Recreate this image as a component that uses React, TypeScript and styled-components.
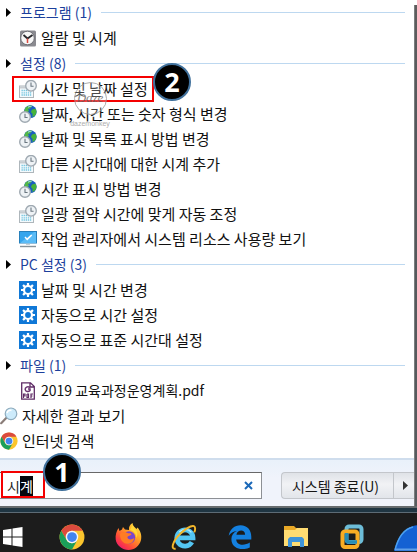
import React, { useEffect, useRef, useState } from "react";
import styled, { createGlobalStyle } from "styled-components";

const GlobalStyle = createGlobalStyle`
  * { box-sizing: border-box; }
  body {
    margin: 0;
    background: #fff;
    overflow: hidden;
    font-family: "Noto Sans CJK KR", "Noto Sans", sans-serif;
  }
  button, input { font: inherit; }
`;

const Screen = styled.main`
  display: flex;
  flex-direction: column;
  min-height: 100vh;
`;

const MenuFrame = styled.div`
  display: flex;
`;

const Menu = styled.div`
  flex: 1;
  min-width: 0;
`;

const RightEdge = styled.div`
  width: 3px;
  margin-top: 5px;
  background: linear-gradient(#5d5d5d, #53595c 25%, #565b5e);
  border-left: 1px solid #7b7d7e;
`;

const Section = styled.section`
  & + & { margin-top: 1px; }
`;

const HeadingButton = styled.button`
  display: flex;
  align-items: center;
  width: 100%;
  height: 25px;
  padding: 0 9px 0 6px;
  border: 0;
  background: none;
  color: #1c3f9c;
  font-size: 14px;
  line-height: 25px;
  white-space: nowrap;

  &::after {
    content: "";
    flex: 1;
    height: 1px;
    margin-left: 9px;
    background: #bdd8f0;
  }
`;

const Arrow = styled.svg`
  width: 5px;
  height: 9px;
  margin-right: 9px;
`;

const List = styled.ul`
  margin: 0;
  padding: 0;
  list-style: none;
`;

const RootList = styled(List)`
  padding-bottom: 5px;
`;

const Item = styled.li`
  position: relative;
  height: 25px;
`;

const ItemLink = styled.a<{ $root?: boolean; $small?: boolean }>`
  display: flex;
  align-items: center;
  gap: 4px;
  height: 25px;
  padding-left: ${(p) => (p.$root ? 0 : 19)}px;
  color: #111;
  font-size: ${(p) => (p.$small ? 14 : 15)}px;
  line-height: 25px;
  text-decoration: none;
  white-space: nowrap;
`;

const Icon = styled.svg<{ $size?: number }>`
  flex: none;
  display: block;
  width: ${(p) => p.$size ?? 18}px;
  height: ${(p) => p.$size ?? 18}px;
`;

const Footer = styled.footer`
  display: flex;
  gap: 19px;
  padding: 12px 0 7px;
  border-top: 2px solid #cfdded;
  background: linear-gradient(#e9f1fa, #f0f3fb 40%);
`;

const SearchBox = styled.div`
  position: relative;
  display: flex;
  align-items: center;
  flex: 1;
  height: 27px;
  border: 1px solid #8d9095;
  border-top-color: #686868;
  border-left: 0;
  background: #fff;
`;

const SearchInput = styled.input`
  flex: 1;
  min-width: 0;
  height: 20px;
  padding: 0 7px;
  border: 0;
  outline: 0;
  background: none;
  color: #222;
  caret-color: transparent;
  font-size: 14px;
  line-height: 20px;

  &::selection { background: #05070d; color: #fff; }
`;

const ClearButton = styled.button`
  display: grid;
  place-items: center;
  width: 26px;
  height: 20px;
  padding: 0;
  border: 0;
  background: none;
`;

const PowerGroup = styled.div`
  display: flex;
  width: 133px;
  height: 27px;
  border: 1px solid #c3c6cb;
  border-right: 0;
  border-radius: 4px 0 0 4px;
  background: linear-gradient(#dfe2e7, #f1f2f5 45%, #e2e5ea);
`;

const PowerButton = styled.button`
  flex: 1;
  padding: 0 4px 0 0;
  border: 0;
  background: none;
  color: #151515;
  font-size: 14px;
  line-height: 24px;
  white-space: nowrap;
`;

const PowerMore = styled.button`
  display: grid;
  place-items: center;
  width: 21px;
  padding: 0 0 0 3px;
  border: 0;
  border-left: 1px solid #c3c6cb;
  background: none;
`;

const BottomEdge = styled.div`
  height: 7px;
  border-top: 2px solid #666b6e;
  border-bottom: 1px solid #5d6b75;
  background: #1f3542;
`;

const Taskbar = styled.nav`
  display: flex;
  flex: 1;
  min-height: 39px;
  background: #1c1c1c;
  overflow: hidden;
`;

const TaskButton = styled.button<{ $start?: boolean }>`
  display: flex;
  flex: none;
  align-items: center;
  justify-content: ${(p) => (p.$start ? "flex-start" : "center")};
  width: ${(p) => (p.$start ? 44 : 56)}px;
  padding: 8px 0 0 ${(p) => (p.$start ? 3 : 0)}px;
  border: 0;
  background: none;
`;

const Highlight = styled.span<{ $place: "item" | "search" }>`
  position: absolute;
  top: ${(p) => (p.$place === "item" ? 0 : -2)}px;
  left: ${(p) => (p.$place === "item" ? 12 : 1)}px;
  width: ${(p) => (p.$place === "item" ? 142 : 44)}px;
  height: ${(p) => (p.$place === "item" ? 26 : 27)}px;
  border: 2px solid #f40000;
  pointer-events: none;
`;

const StepBadge = styled.span<{ $place: "item" | "search" }>`
  position: absolute;
  top: ${(p) => (p.$place === "item" ? -13 : -20)}px;
  left: ${(p) => (p.$place === "item" ? 153 : 43)}px;
  z-index: 2;
  width: 38px;
  height: 38px;
  border: 2px solid #41719c;
  border-radius: 50%;
  background: #000;
  color: #fff;
  font: bold 27px/33px "Noto Sans", sans-serif;
  text-align: center;
  pointer-events: none;
`;

const Watermark = styled.span`
  position: absolute;
  top: 6px;
  left: 67px;
  z-index: 1;
  display: flex;
  flex-direction: column;
  align-items: center;
  gap: 4px;
  width: 46px;
  color: #999;
  font: 7px/10px "Liberation Sans", sans-serif;
  opacity: 0.8;
  pointer-events: none;
`;

const WatermarkRing = styled.span`
  width: 33px;
  height: 33px;
  border: 1px solid #999;
  border-radius: 50%;
  background: rgba(255, 255, 255, 0.3);
  color: #666;
  font: italic 13px/30px "Liberation Serif", serif;
  text-align: center;
`;

const AlarmIcon = () => (
  <Icon viewBox="0 0 18 18" aria-hidden="true">
    <rect x="1" y="1.500" width="16" height="16" rx="1.500" fill="#8a8a90" />
    <circle cx="8.500" cy="9" r="6.800" fill="#f6f6f6" stroke="#6d6d74" strokeWidth="1" />
    <path d="M4.500 6 8.500 9.500l5-3.500" stroke="#29292d" strokeWidth="1.800" fill="none" />
    <path d="M8.500 9.500v4.500" stroke="#d9483f" strokeWidth="1.500" />
  </Icon>
);

const Clock = ({ x, y }: { x: number; y: number }) => (
  <g>
    <circle cx={x} cy={y} r="5.3" fill="#eef2f5" stroke="#9fa9b1" strokeWidth="1.4" />
    <path d={`M${x} ${y - 3.3}V${y + 0.5}H${x + 2.6}`} stroke="#6b7780" strokeWidth="1.1" fill="none" />
  </g>
);

const CalendarIcon = () => (
  <Icon viewBox="0 0 18 18" aria-hidden="true">
    <rect x=".5" y="6" width="14" height="11.5" fill="#f4fafd" stroke="#aeb6bb" />
    <path d="M1 6.5h13v2H1z" fill="#c7cdd1" />
    <path d="M2.5 10.5h10M2.5 12.8h10M2.5 15h10" stroke="#71c4de" strokeWidth="1.3" strokeDasharray="1.3 .8" />
    <Clock x={12} y={5.8} />
  </Icon>
);

const GlobeIcon = () => (
  <Icon viewBox="0 0 18 18" aria-hidden="true">
    <circle cx="11.3" cy="6.7" r="6.4" fill="#1b60bd" />
    <path d="M6 3.5C8 .5 12 0 13 1L11 3.5 9 4l1 2-3 2-2-1z" fill="#55b948" />
    <path d="M13 4.5l3.5-.7c1.5 2 1.3 5-.6 6.8L13.4 12l.3-3-1.8-2z" fill="#46b33a" />
    <path d="M9 2.3c1.3-1 2.5-1 3.5-.7" stroke="#a9dfff" fill="none" />
    <Clock x={6} y={12} />
  </Icon>
);

const MonitorIcon = () => (
  <Icon viewBox="0 0 18 18" aria-hidden="true">
    <rect x=".5" y="1.5" width="17" height="11.5" fill="#35a5ed" stroke="#2780bc" />
    <path d="M1 13 15 2h2v11z" fill="#5bbcf7" />
    <path d="M6 7l2.2 2.4L12.7 5" stroke="#fff" strokeWidth="1.5" fill="none" />
    <path d="M1 16.5h16" stroke="#87939b" strokeWidth="1.4" />
    <path d="M7 14.5h4" stroke="#c6d0d6" />
  </Icon>
);

const GearIcon = () => (
  <Icon viewBox="0 0 18 18" aria-hidden="true">
    <rect width="18" height="18" fill="#0f78d7" />
    <g stroke="#fff" strokeWidth="2.2">
      <path d="M9 2v3M9 13v3M2 9h3M13 9h3M4.05 4.05l2.1 2.1M11.85 11.85l2.1 2.1M4.05 13.95l2.1-2.1M11.85 6.15l2.1-2.1" />
      <circle cx="9" cy="9" r="4" fill="#0f78d7" />
    </g>
  </Icon>
);

const PdfIcon = () => (
  <Icon viewBox="0 0 18 18" aria-hidden="true">
    <path d="M2.7 10V.8h8.8l3.8 3.8V10M11 1v4h4" fill="#fff" stroke="#5f2c66" strokeWidth="1.3" />
    <path d="M2.7 10v7.2h12.6V10" fill="#fff" stroke="#5f2c66" strokeWidth="1.3" />
    <path d="M11 5.5C8.500 4 6 5.300 6.200 7.500S9.500 10.400 11 8.500V7H9" fill="none" stroke="#6a3371" strokeWidth="1.5" />
    <path d="M4.500 16v-4h1.500v2H4.500M8 12v3.500h1.500V12H8M12 16v-4h2M12 14h1.500" fill="none" stroke="#5f2c66" strokeWidth="1.200" />
  </Icon>
);

const SearchIcon = () => (
  <Icon viewBox="0 0 18 18" aria-hidden="true">
    <path d="M1.200 16.200l5-5.200" stroke="#8a7d78" strokeWidth="2.200" strokeLinecap="round" />
    <circle cx="11" cy="6.800" r="5.800" fill="#cdebfb" stroke="#8eabbd" strokeWidth="1.200" />
    <path d="M7 6c.7-2 2.500-3 4.500-2.500" stroke="#fff" strokeWidth="1.500" fill="none" />
  </Icon>
);

const ChromeIcon = ({ size = 18 }: { size?: number }) => (
  <Icon $size={size} viewBox="0 0 48 48" aria-hidden="true">
    <circle cx="24" cy="24" r="23" fill="#fbc52d" />
    <path d="M4.100 12.500A23 23 0 0 1 43.900 12.500H24a11.500 11.500 0 0 0-10 17.200z" fill="#db4a3e" />
    <path d="M4.100 12.500A23 23 0 0 0 24 47l10-17.300A11.500 11.500 0 0 1 14 29.700z" fill="#1a9f5a" />
    <circle cx="24" cy="24" r="11.500" fill="#f4f6fb" />
    <circle cx="24" cy="24" r="9" fill="#4285ee" />
  </Icon>
);

const WindowsIcon = () => (
  <Icon $size={20} viewBox="0 0 20 20" aria-hidden="true">
    <path d="M0 3l8.500-1.200v7.700H0zM9.500 1.600 19.500 0v9.500h-10zM0 10.500h8.500v7.700L0 17zM9.500 10.500h10V20l-10-1.600z" fill="#fff" />
  </Icon>
);

const FirefoxIcon = () => (
  <Icon $size={27} viewBox="0 0 27 27" aria-hidden="true">
    <defs>
      <linearGradient id="fox" x1="1" y1="0" x2=".2" y2="1">
        <stop offset="0" stopColor="#fff04a" />
        <stop offset=".4" stopColor="#ffa424" />
        <stop offset=".75" stopColor="#ff4939" />
        <stop offset="1" stopColor="#ed166e" />
      </linearGradient>
    </defs>
    <path d="M3.500 5l1 3L7 6.500 8 4l2 2.500 4 .5c-.5-3 1-5.500 3.500-7 .2 3 2.500 4 4 6l1-1.500C25.500 8 27 12 26 17c-1.500 6-6.500 10-12.500 10S1.500 22.500.7 16.500C.2 12 1.500 8 3.500 5z" fill="url(#fox)" />
    <circle cx="14" cy="14.500" r="6.200" fill="#7745cf" />
    <path d="M5 11c3-3 6-2 8-.7 2-.3 3 0 3.500 1-1 1.700-3.500 1.200-4.200 3 1.200 3.200 4.700 2.400 7 .7-.7 4-3.500 6-7 5.700C8 20.500 5 17 5 11z" fill="#ff7c25" />
    <path d="M15 7c4 1 6.500 4 6.300 8 2-3 1.200-7-1.500-9.500L17.500 2z" fill="#ffd838" />
  </Icon>
);

const IeIcon = () => (
  <Icon $size={26} viewBox="0 0 28 28" aria-hidden="true">
    <path d="M22.500 19.500A8.700 8.700 0 1 1 23.700 15H8" fill="none" stroke="#54c5f2" strokeWidth="5.200" />
    <path d="M22 9c-3-4-9-4.500-13-.5" fill="none" stroke="#b6ecff" strokeWidth="1.500" />
    <path d="M5 26.500C-1 28 2 18 10 10.500S26-1 26 5c0 1.500-.5 3-1 4" fill="none" stroke="#f2b62b" strokeWidth="2.100" />
  </Icon>
);

const EdgeIcon = () => (
  <Icon $size={24} viewBox="0 0 24 24" aria-hidden="true">
    <path d="M.7 10.700C2 4 6.500.3 12.500.3c7 0 10.800 5 10.800 11.400v2.800H8.200c.3 6.300 8.500 6.300 13.600 3.100v4.800c-7.200 3.700-18.400 1.800-18.400-8.300 0-4.100 2-6.700 5.500-8.200C5.300 6.300 2.500 8.200.7 10.700zm7.700-1h8.700c0-5.700-7.700-5.300-8.700 0z" fill="#1480df" />
  </Icon>
);

const ExplorerIcon = () => (
  <Icon $size={26} viewBox="0 0 26 26" aria-hidden="true">
    <path d="M1 2h10l2 2h12v18H1z" fill="#e9a927" />
    <path d="M1 6h11l2-2h11v18H1z" fill="#ffdc72" />
    <path d="M5 23v-8l2-2h12l2 2v8h-4v-5H9v5z" fill="#3f94d9" />
  </Icon>
);

const VmwareIcon = () => (
  <Icon $size={26} viewBox="0 0 26 26" aria-hidden="true">
    <rect x="7.500" y="2.500" width="15" height="15.500" rx="2.500" fill="none" stroke="#6dbdd8" strokeWidth="4" />
    <rect x="3.500" y="7.500" width="15" height="15.500" rx="2.500" fill="none" stroke="#f9ad24" strokeWidth="4" />
    <path d="M7.500 9v6.500q0 2.500 2.500 2.500h8" fill="none" stroke="#298db4" strokeWidth="3.500" />
  </Icon>
);

const DomeIcon = () => (
  <Icon $size={28} viewBox="0 0 28 28" aria-hidden="true">
    <path d="M0 28C3 16 9 6 19 3c4-1 7-1 9 0v25z" fill="#1461d3" />
    <path d="M1 27C4 15 10 6 19 4" fill="none" stroke="#4ba0ef" strokeWidth="1.500" />
    <path d="M1 26.500h27" stroke="#5f9fe6" strokeWidth="2" />
  </Icon>
);

type Entry = { label: string; icon: () => React.JSX.Element; step?: string; small?: boolean };

const sections: { title: string; items: Entry[] }[] = [
  { title: "프로그램 (1)", items: [{ label: "알람 및 시계", icon: AlarmIcon }] },
  {
    title: "설정 (8)",
    items: [
      { label: "시간 및 날짜 설정", icon: CalendarIcon, step: "2" },
      { label: "날짜, 시간 또는 숫자 형식 변경", icon: GlobeIcon },
      { label: "날짜 및 목록 표시 방법 변경", icon: GlobeIcon },
      { label: "다른 시간대에 대한 시계 추가", icon: CalendarIcon },
      { label: "시간 표시 방법 변경", icon: GlobeIcon },
      { label: "일광 절약 시간에 맞게 자동 조정", icon: CalendarIcon },
      { label: "작업 관리자에서 시스템 리소스 사용량 보기", icon: MonitorIcon },
    ],
  },
  {
    title: "PC 설정 (3)",
    items: [
      { label: "날짜 및 시간 변경", icon: GearIcon },
      { label: "자동으로 시간 설정", icon: GearIcon },
      { label: "자동으로 표준 시간대 설정", icon: GearIcon },
    ],
  },
  { title: "파일 (1)", items: [{ label: "2019 교육과정운영계획.pdf", icon: PdfIcon, small: true }] },
];

const tasks = [
  { name: "Chrome", icon: <ChromeIcon size={26} /> },
  { name: "Firefox", icon: <FirefoxIcon /> },
  { name: "Internet Explorer", icon: <IeIcon /> },
  { name: "Edge", icon: <EdgeIcon /> },
  { name: "파일 탐색기", icon: <ExplorerIcon /> },
  { name: "VMware", icon: <VmwareIcon /> },
  { name: "앱", icon: <DomeIcon /> },
];

export default function App() {
  const [query, setQuery] = useState("시계");
  const inputRef = useRef<HTMLInputElement>(null);

  useEffect(() => {
    inputRef.current?.focus();
    inputRef.current?.setSelectionRange(1, 2);
  }, []);

  return (
    <Screen>
      <GlobalStyle />
      <MenuFrame>
        <Menu>
          {sections.map((section) => (
            <Section key={section.title}>
              <HeadingButton type="button" aria-expanded="true">
                <Arrow viewBox="0 0 5 9" aria-hidden="true">
                  <path d="M0 0l5 4.500L0 9z" fill="#000" />
                </Arrow>
                {section.title}
              </HeadingButton>
              <List>
                {section.items.map(({ label, icon: EntryIcon, step, small }) => (
                  <Item key={label}>
                    <ItemLink href="#" $small={small}>
                      <EntryIcon />
                      {label}
                    </ItemLink>
                    {step && (
                      <>
                        <Watermark>
                          <WatermarkRing>Daze</WatermarkRing>
                          dazemonkey
                        </Watermark>
                        <Highlight $place="item" />
                        <StepBadge $place="item">{step}</StepBadge>
                      </>
                    )}
                  </Item>
                ))}
              </List>
            </Section>
          ))}
          <RootList>
            <Item>
              <ItemLink href="#" $root>
                <SearchIcon />
                자세한 결과 보기
              </ItemLink>
            </Item>
            <Item>
              <ItemLink href="#" $root>
                <ChromeIcon />
                인터넷 검색
              </ItemLink>
            </Item>
          </RootList>
          <Footer>
            <SearchBox>
              <SearchInput
                ref={inputRef}
                aria-label="검색"
                value={query}
                onChange={(e) => setQuery(e.target.value)}
              />
              <ClearButton type="button" aria-label="지우기" onClick={() => setQuery("")}>
                <Icon $size={9} viewBox="0 0 9 9" aria-hidden="true">
                  <path d="M1 1l7 7M8 1 1 8" stroke="#1b68b8" strokeWidth="2" />
                </Icon>
              </ClearButton>
              <Highlight $place="search" />
              <StepBadge $place="search">1</StepBadge>
            </SearchBox>
            <PowerGroup>
              <PowerButton type="button">시스템 종료(U)</PowerButton>
              <PowerMore type="button" aria-label="종료 옵션">
                <Icon $size={9} viewBox="0 0 9 9" aria-hidden="true">
                  <path d="M2 0l5 4.500L2 9z" fill="#333" />
                </Icon>
              </PowerMore>
            </PowerGroup>
          </Footer>
        </Menu>
        <RightEdge />
      </MenuFrame>
      <BottomEdge />
      <Taskbar aria-label="작업 표시줄">
        <TaskButton type="button" $start aria-label="시작">
          <WindowsIcon />
        </TaskButton>
        {tasks.map((task) => (
          <TaskButton type="button" key={task.name} aria-label={task.name}>
            {task.icon}
          </TaskButton>
        ))}
      </Taskbar>
    </Screen>
  );
}
